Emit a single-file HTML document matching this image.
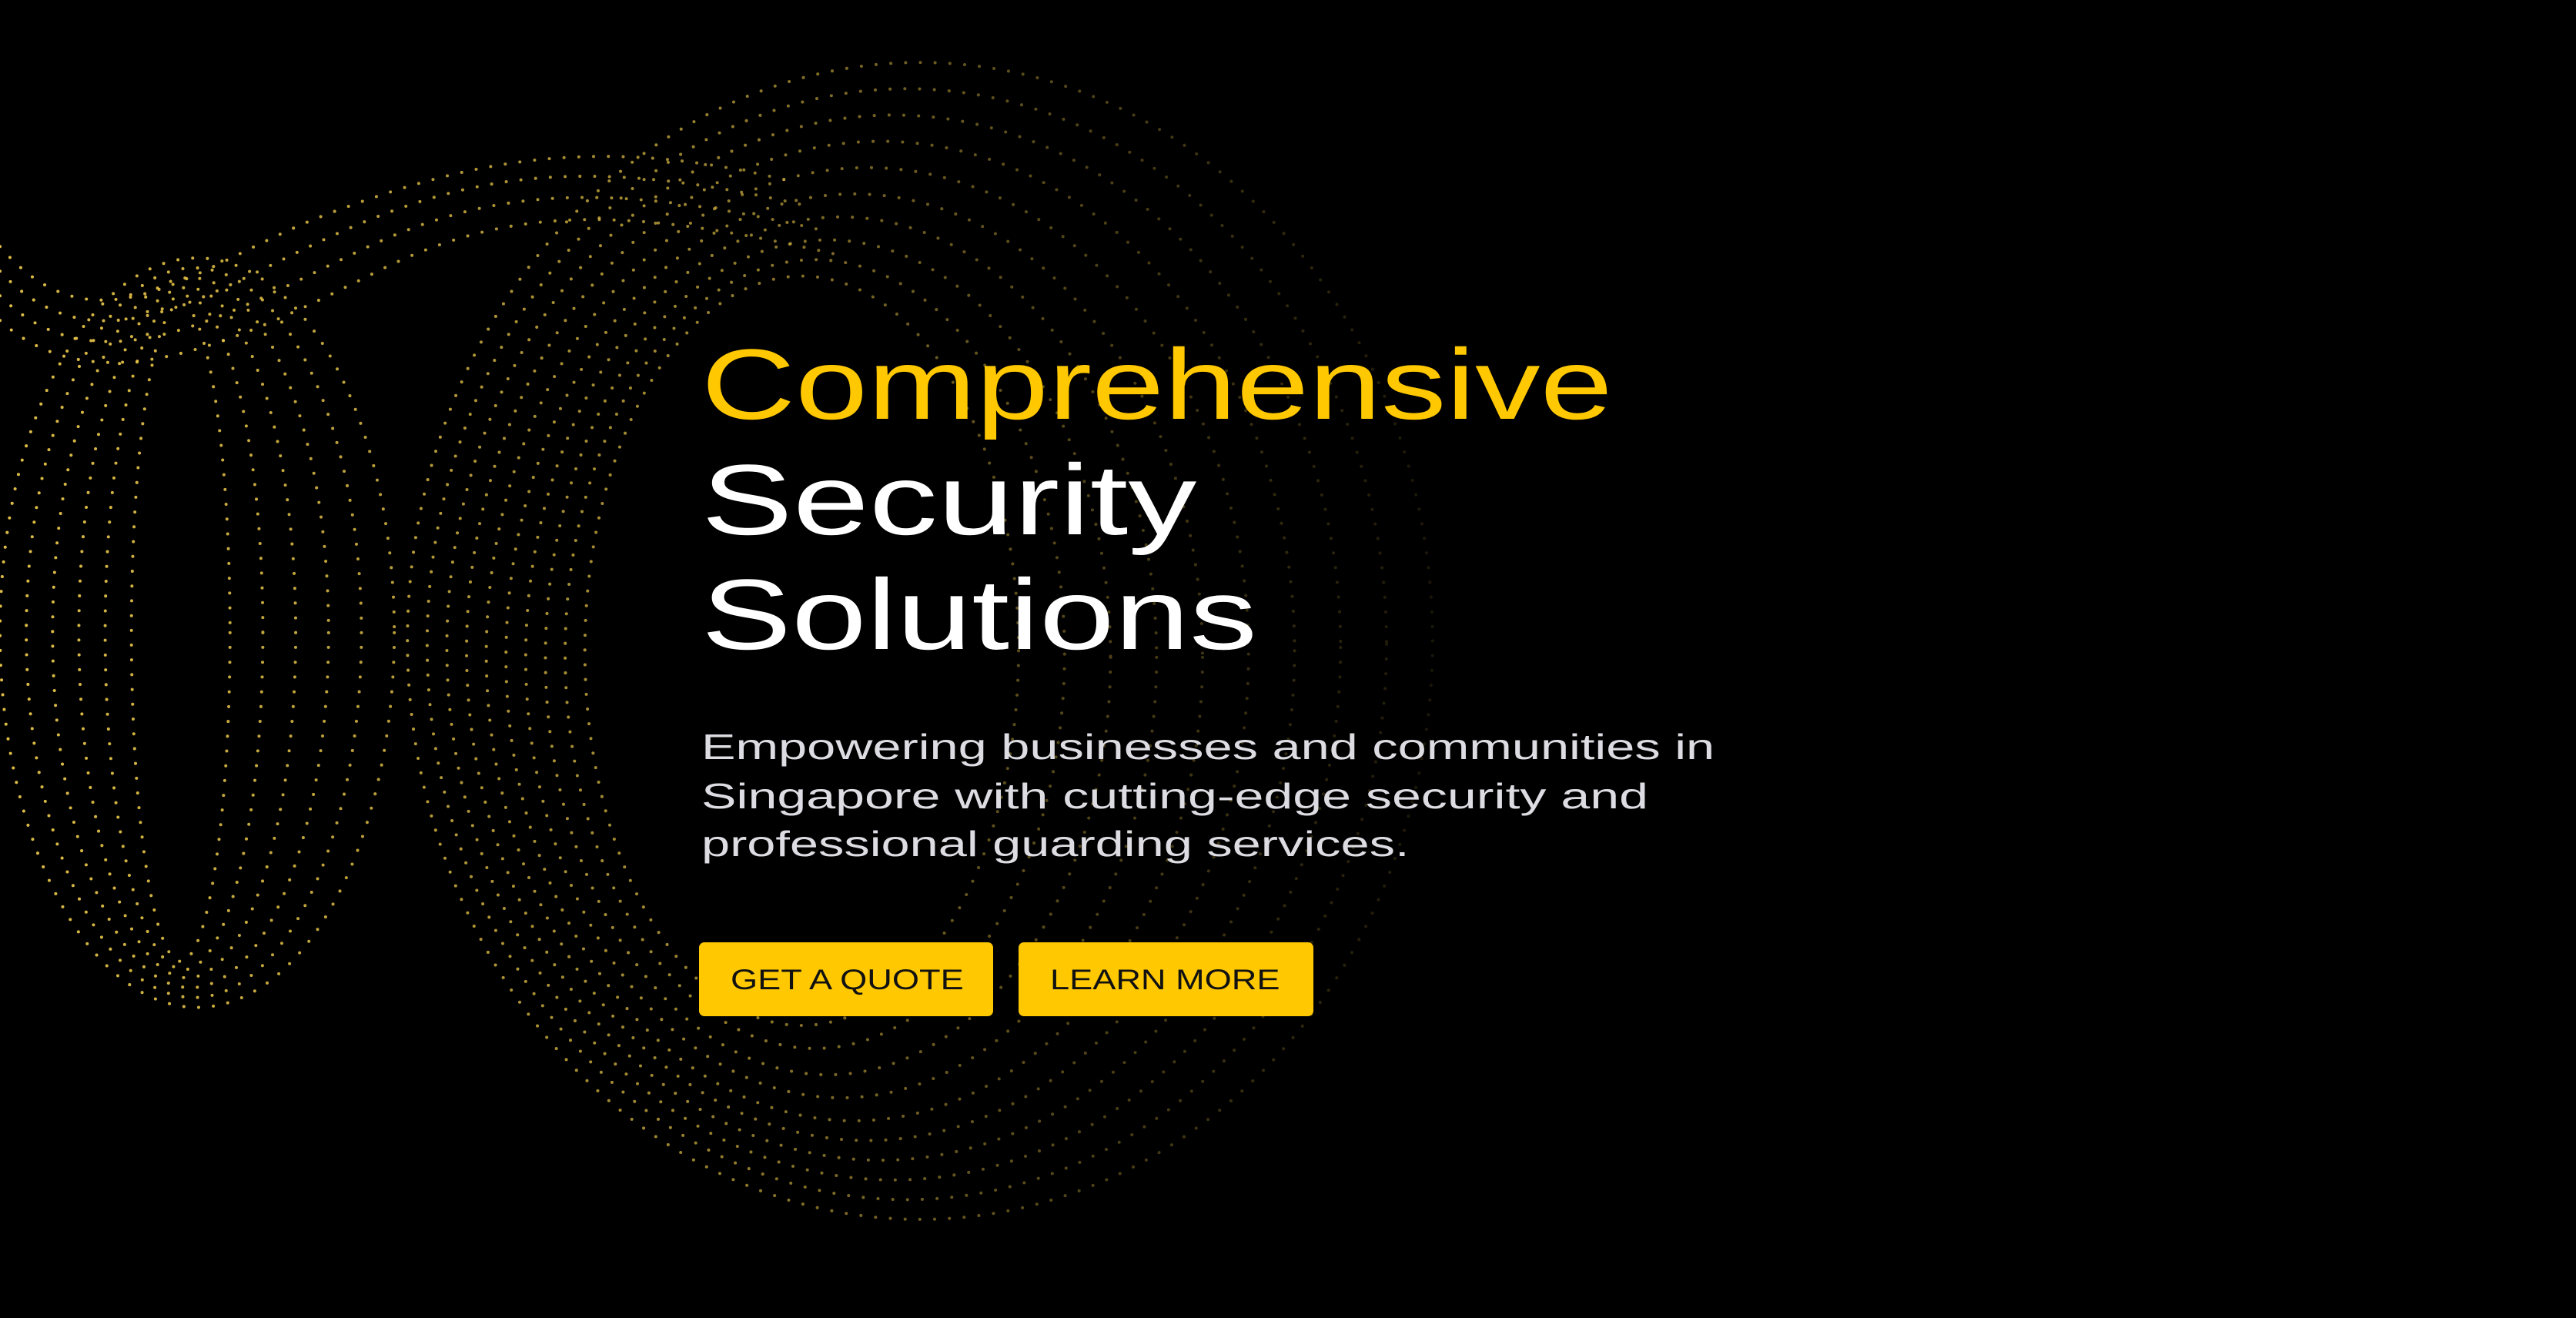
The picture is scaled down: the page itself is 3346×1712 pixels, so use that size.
<!DOCTYPE html>
<html><head><meta charset="utf-8"><style>
html,body{margin:0;padding:0;background:#000;width:3346px;height:1712px;overflow:hidden}
.t{position:absolute;white-space:nowrap;transform-origin:0 0;font-family:"Liberation Sans",sans-serif}
.h{font-size:130px;line-height:130px;left:911px}
.p{font-size:46px;line-height:46px;left:911px;color:#dcdce2;transform:scaleX(1.45)}
.b{position:absolute;top:1224px;height:96px;background:#ffc800;border-radius:7px}
.b span{position:absolute;top:30px;font-family:"Liberation Sans",sans-serif;font-size:37px;line-height:37px;color:#111;white-space:nowrap;transform-origin:0 0;transform:scaleX(1.22)}
</style></head><body>
<svg width="3346" height="1712" viewBox="0 0 1568 802" preserveAspectRatio="none" style="position:absolute;left:0;top:0">
<defs>
<linearGradient id="g" gradientUnits="userSpaceOnUse" x1="0" y1="0" x2="900" y2="0">
<stop offset="0" stop-color="#e8c64a" stop-opacity="0.95"/>
<stop offset="0.45" stop-color="#e0bf45" stop-opacity="0.7"/>
<stop offset="1" stop-color="#b09030" stop-opacity="0.12"/>
</linearGradient>
</defs>
<g fill="none" stroke="url(#g)" stroke-width="1.9" stroke-linecap="round" stroke-dasharray="0 9">
<ellipse cx="560" cy="390" rx="312" ry="352"/>
<ellipse cx="552" cy="392" rx="292" ry="338"/>
<ellipse cx="544" cy="394" rx="272" ry="324"/>
<ellipse cx="536" cy="396" rx="252" ry="310"/>
<ellipse cx="528" cy="398" rx="232" ry="296"/>
<ellipse cx="520" cy="400" rx="212" ry="282"/>
<ellipse cx="512" cy="400" rx="192" ry="268"/>
<ellipse cx="504" cy="400" rx="172" ry="254"/>
<ellipse cx="496" cy="398" rx="152" ry="240"/>
<ellipse cx="488" cy="396" rx="132" ry="228"/>
<ellipse cx="120" cy="385" rx="120" ry="228"/>
<ellipse cx="118" cy="385" rx="102" ry="222"/>
<ellipse cx="116" cy="385" rx="84" ry="216"/>
<ellipse cx="114" cy="385" rx="66" ry="210"/>
<ellipse cx="112" cy="385" rx="48" ry="205"/>
<ellipse cx="110" cy="385" rx="30" ry="200"/>
<path d="M0 150 C60 220 120 160 200 130 S360 80 480 110"/>
<path d="M0 165 C60 230 130 175 210 140 S360 95 490 125"/>
<path d="M0 180 C60 240 140 190 220 152 S370 110 500 140"/>
<path d="M0 195 C60 250 150 205 230 165 S380 125 510 155"/>
</g>
</svg>
<div class="t h" style="top:434px;color:#ffc800;transform:scaleX(1.3)">Comprehensive</div>
<div class="t h" style="top:584px;color:#fff;transform:scaleX(1.37)">Security</div>
<div class="t h" style="top:733px;color:#fff;transform:scaleX(1.35)">Solutions</div>
<div class="t p" style="top:947px">Empowering businesses and communities in</div>
<div class="t p" style="top:1011px;transform:scaleX(1.48)">Singapore with cutting-edge security and</div>
<div class="t p" style="top:1073px">professional guarding services.</div>
<div class="b" style="left:908px;width:382px"><span style="left:41px">GET A QUOTE</span></div>
<div class="b" style="left:1323px;width:383px"><span style="left:41px">LEARN MORE</span></div>
</body></html>
